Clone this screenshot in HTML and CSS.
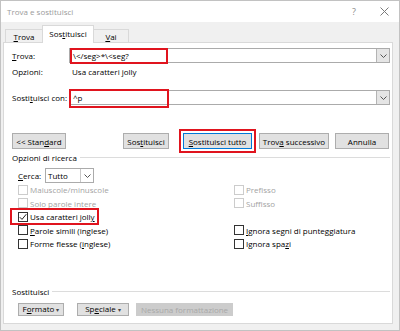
FILE: index.html
```html
<!DOCTYPE html>
<html lang="it">
<head>
    <meta charset="UTF-8">
    <title>Trova e sostituisci</title>
    <link rel="stylesheet" href="styles.css">
</head>
<body>
    <div class="window">
        <div class="titlebar">
            <span class="title">Trova e sostituisci</span>
            <span class="help">?</span>
            <span class="close">
                <svg width="9" height="9" viewBox="0 0 9 9"><path d="M0.5 0.5 L8.5 8.5 M8.5 0.5 L0.5 8.5" stroke="#7a7a7a" stroke-width="1"/></svg>
            </span>
        </div>

        <div class="tabs">
            <div class="tab tab-find"><u>T</u>rova</div>
            <div class="tab tab-replace active">Sos<u>t</u>ituisci</div>
            <div class="tab tab-goto"><u>V</u>ai</div>
        </div>

        <div class="panel">
            <!-- campo Trova -->
            <div class="field">
                <label class="field-label"><u>T</u>rova:</label>
                <div class="combo">
                    <span class="combo-value">\&lt;/seg&gt;*\&lt;seg?</span>
                    <span class="combo-drop">
                        <svg width="7" height="4" viewBox="0 0 7 4"><path d="M0.5 0.5 L3.5 3.5 L6.5 0.5" fill="none" stroke="#555" stroke-width="1"/></svg>
                    </span>
                    <span class="mark mark-find"></span>
                </div>
            </div>
            <div class="info-row">
                <span class="info-label">Opzioni:</span>
                <span>Usa caratteri jolly</span>
            </div>

            <!-- campo Sostituisci con -->
            <div class="field field-replace">
                <label class="field-label">Sosti<u>t</u>uisci con:</label>
                <div class="combo">
                    <span class="combo-value">^p</span>
                    <span class="combo-drop">
                        <svg width="7" height="4" viewBox="0 0 7 4"><path d="M0.5 0.5 L3.5 3.5 L6.5 0.5" fill="none" stroke="#555" stroke-width="1"/></svg>
                    </span>
                    <span class="mark mark-replace"></span>
                </div>
            </div>

            <!-- pulsanti -->
            <div class="btn-row">
                <button class="btn btn-standard">&lt;&lt; Stan<u>d</u>ard</button>
                <button class="btn btn-sost">Sos<u>t</u>ituisci</button>
                <button class="btn btn-all"><u>S</u>ostituisci tutto</button>
                <button class="btn btn-next">Trov<u>a</u> successivo</button>
                <button class="btn btn-cancel">Annulla</button>
            </div>

            <!-- opzioni di ricerca -->
            <div class="group-title">
                <span>Opzioni di ricerca</span>
                <span class="group-line"></span>
            </div>
            <div class="group">
                <div class="search-row">
                    <span class="search-label"><u>C</u>erca:</span>
                    <div class="select">
                        <span class="select-value">Tutto</span>
                        <span class="select-drop">
                            <svg width="7" height="4" viewBox="0 0 7 4"><path d="M0.5 0.5 L3.5 3.5 L6.5 0.5" fill="none" stroke="#555" stroke-width="1"/></svg>
                        </span>
                    </div>
                </div>
                <div class="options">
                    <div class="check disabled"><span class="box"></span>Maiuscole/minuscole</div>
                    <div class="check disabled"><span class="box"></span>Prefisso</div>
                    <div class="check disabled"><span class="box"></span>Solo parole intere</div>
                    <div class="check disabled"><span class="box"></span>Suffisso</div>
                    <div class="check checked">
                        <span class="box">
                            <svg width="8" height="8" viewBox="0 0 8 8"><path d="M0.8 4.2 L3 6.4 L7.3 1.2" fill="none" stroke="#222" stroke-width="1"/></svg>
                        </span>Usa caratteri joll<u>y</u>
                        <span class="mark mark-jolly"></span>
                    </div>
                    <div class="check empty"></div>
                    <div class="check"><span class="box"></span><u>P</u>arole simili (inglese)</div>
                    <div class="check"><span class="box"></span><u>I</u>gnora segni di punteggiatura</div>
                    <div class="check"><span class="box"></span>Forme flesse (<u>i</u>nglese)</div>
                    <div class="check"><span class="box"></span>Ignora spa<u>z</u>i</div>
                </div>
            </div>

            <!-- sostituisci -->
            <div class="group-title group-title-replace">
                <span>Sostituisci</span>
                <span class="group-line"></span>
            </div>
            <div class="group format-row">
                <button class="btn btn-small btn-format">F<u>o</u>rmato <span class="caret">&#9662;</span></button>
                <button class="btn btn-small btn-special">Sp<u>e</u>ciale <span class="caret">&#9662;</span></button>
                <button class="btn btn-small btn-none" disabled>Nessuna formattazione</button>
            </div>
        </div>
    </div>
</body>
</html>
```

FILE: styles.css
```css
body {
    margin: 0;
    font-family: "Open Sans", "Noto Sans", sans-serif;
    font-size: 8px;
    color: #000;
    background-color: #f0f0f0;
}
u {
    text-decoration-thickness: 1px;
    text-underline-offset: 1px;
}
.window {
    width: 400px;
    height: 331px;
    box-sizing: border-box;
    border: 1px solid #c2c2c2;
    background-color: #f0f0f0;
    overflow: hidden;
}
.titlebar {
    height: 21px;
    background-color: #fff;
    display: flex;
    align-items: center;
    padding-left: 6px;
}
.title {
    flex: 1;
    color: #9a9a9a;
    font-size: 8px;
}
.help {
    color: #8a8a8a;
    font-size: 9px;
    margin-right: 24px;
}
.close {
    display: flex;
    margin-right: 10px;
}
/* schede */
.tabs {
    height: 20px;
    display: flex;
    align-items: flex-end;
    padding-left: 4px;
}
.tab {
    box-sizing: border-box;
    height: 13px;
    border: 1px solid #d9d9d9;
    border-bottom: none;
    display: flex;
    align-items: center;
    justify-content: center;
    margin-left: -1px;
}
.tab-find {
    width: 38px;
    margin-left: 0;
}
.tab-replace {
    width: 52px;
}
.tab-goto {
    width: 36px;
}
.tab.active {
    height: 18px;
    background-color: #fff;
    margin-bottom: -1px;
    position: relative;
    z-index: 1;
    align-items: flex-start;
    padding-top: 2px;
}
.panel {
    position: relative;
    box-sizing: border-box;
    width: 390px;
    height: 282px;
    margin-left: 2px;
    padding: 5px 2px 0 8px;
    background-color: #fff;
    border: 1px solid #d9d9d9;
}
/* campi */
.field {
    display: flex;
    align-items: center;
    height: 15px;
}
.field-replace {
    margin-top: 11px;
}
.field-label {
    width: 57px;
}
.combo {
    position: relative;
    flex: 1;
    box-sizing: border-box;
    height: 15px;
    border: 1px solid #ababab;
    display: flex;
    align-items: center;
}
.combo-value {
    flex: 1;
    padding-left: 3px;
}
.combo-drop {
    box-sizing: border-box;
    width: 13px;
    height: 13px;
    background-color: #e5e5e5;
    border-left: 1px solid #b4b4b4;
    display: flex;
    align-items: center;
    justify-content: center;
}
.info-row {
    display: flex;
    align-items: center;
    height: 16px;
}
.info-label {
    width: 60px;
}
/* riquadri rossi */
.mark {
    position: absolute;
    box-sizing: border-box;
    border: 2px solid #e0141e;
    pointer-events: none;
}
.mark-find {
    left: 0;
    top: -1px;
    width: 98px;
    height: 16px;
}
.mark-replace {
    left: -1px;
    top: -2px;
    width: 100px;
    height: 19px;
}
.mark-jolly {
    left: -8px;
    top: -2px;
    width: 89px;
    height: 17px;
}
/* pulsanti */
.btn {
    box-sizing: border-box;
    height: 16px;
    padding: 0;
    font-family: inherit;
    font-size: inherit;
    color: #000;
    background-color: #e1e1e1;
    border: 1px solid #adadad;
    white-space: nowrap;
}
.btn-row {
    display: flex;
    margin-top: 28px;
    padding-right: 1px;
}
.btn-standard {
    width: 54px;
}
.btn-sost {
    width: 46px;
    margin-left: auto;
}
.btn-all {
    width: 69px;
    margin-left: 14px;
    border-color: #0078d7;
    outline: 2px solid #e0141e;
    outline-offset: 2px;
}
.btn-next {
    width: 70px;
    margin-left: 7px;
}
.btn-cancel {
    width: 54px;
    margin-left: 6px;
}
/* gruppi */
.group-title {
    display: flex;
    align-items: center;
    height: 15px;
    margin-top: 1px;
}
.group-line {
    flex: 1;
    height: 1px;
    margin-left: 3px;
    background-color: #dcdcdc;
}
.group {
    padding-left: 6px;
}
.search-row {
    display: flex;
    align-items: center;
    margin-top: 3px;
    height: 15px;
}
.search-label {
    width: 27px;
}
.select {
    box-sizing: border-box;
    width: 49px;
    height: 15px;
    border: 1px solid #ababab;
    display: flex;
    align-items: center;
}
.select-value {
    flex: 1;
    padding-left: 2px;
}
.select-drop {
    box-sizing: border-box;
    width: 13px;
    height: 13px;
    border-left: 1px solid #c8c8c8;
    display: flex;
    align-items: center;
    justify-content: center;
}
.options {
    display: grid;
    grid-template-columns: 216px 1fr;
    grid-auto-rows: 13.5px;
}
.check {
    position: relative;
    display: flex;
    align-items: center;
}
.box {
    box-sizing: border-box;
    width: 10px;
    height: 10px;
    border: 1px solid #333;
    background-color: #fff;
    margin-right: 2px;
    display: flex;
    align-items: center;
    justify-content: center;
}
.check.disabled {
    color: #a3a3a3;
}
.check.disabled .box {
    border-color: #cccccc;
}
.group-title-replace {
    margin-top: 33.5px;
}
.format-row {
    display: flex;
    margin-top: 4px;
}
.btn-small {
    height: 13px;
    line-height: 10px;
}
.btn-format {
    width: 46px;
}
.btn-special {
    width: 52px;
    margin-left: 13px;
}
.btn-none {
    width: 97px;
    margin-left: 7px;
    color: #a8a8a8;
    background-color: #cccccc;
    border-color: #cccccc;
}
.caret {
    font-size: 6px;
    color: #444;
}
```
